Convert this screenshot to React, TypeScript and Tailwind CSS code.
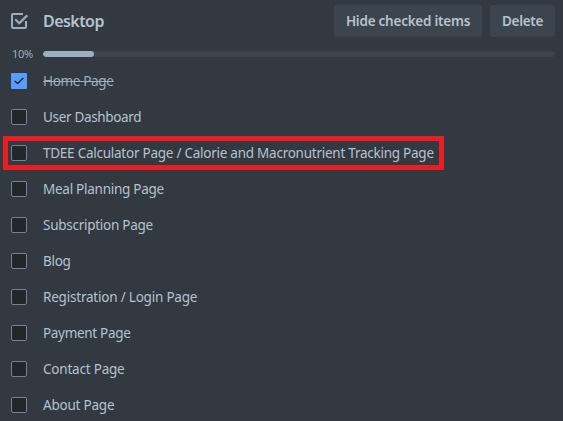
type Item = { label: string; tracking: string; checked?: boolean; highlighted?: boolean };

const items: Item[] = [
  { label: "Home Page", tracking: "tracking-[-0.33px]", checked: true },
  { label: "User Dashboard", tracking: "tracking-[-0.33px]" },
  {
    label: "TDEE Calculator Page / Calorie and Macronutrient Tracking Page",
    tracking: "tracking-[-0.25px]",
    highlighted: true,
  },
  { label: "Meal Planning Page", tracking: "tracking-[-0.26px]" },
  { label: "Subscription Page", tracking: "tracking-[-0.27px]" },
  { label: "Blog", tracking: "tracking-[-0.3px]" },
  { label: "Registration / Login Page", tracking: "tracking-[-0.21px]" },
  { label: "Payment Page", tracking: "tracking-[-0.31px]" },
  { label: "Contact Page", tracking: "tracking-[-0.21px]" },
  { label: "About Page", tracking: "tracking-[-0.22px]" },
];

function ChecklistIcon() {
  return (
    <svg width="18" height="18" viewBox="0 0 18 18" fill="none" stroke="#9fadbc" strokeWidth="2" className="shrink-0">
      <path d="M13 2H3a1 1 0 0 0-1 1v12a1 1 0 0 0 1 1h12a1 1 0 0 0 1-1V9" />
      <path d="M5.2 7.2 9.2 11.2 17.3 3.3" strokeWidth="2.2" />
    </svg>
  );
}

function Checkbox({ checked }: { checked?: boolean }) {
  if (checked) {
    return (
      <span className="flex size-4 shrink-0 items-center justify-center rounded-[1px] bg-[#579dff]">
        <svg width="16" height="16" viewBox="0 0 16 16" fill="none" stroke="#22272b" strokeWidth="1.4" strokeLinecap="round" strokeLinejoin="round">
          <path d="M4 8.2 6.7 10.6 12 5.2" />
        </svg>
      </span>
    );
  }
  return <span className="size-4 shrink-0 rounded-[2px] border border-[#738496] bg-[#22272b]" />;
}

function Row({ item }: { item: Item }) {
  return (
    <li className="relative flex h-9 items-center gap-4 pl-[11px]">
      <Checkbox checked={item.checked} />
      <span
        className={`whitespace-nowrap text-[13.5px] leading-5 ${item.tracking} ${
          item.checked ? "text-[#9fadbc] line-through" : "text-[#b6c2cf]"
        }`}
      >
        {item.label}
      </span>
      {item.highlighted && (
        <span className="absolute top-px left-[3px] h-[34px] w-[441px] border-5 border-[#ed1c24]" />
      )}
    </li>
  );
}

export default function App() {
  return (
    <div className="h-[421px] w-[563px] overflow-hidden bg-[#323940] font-['Noto_Sans',sans-serif] text-[#b6c2cf]">
      <header className="flex h-[42px] items-start pt-[5px] pr-2 pl-[10px]">
        <div className="flex h-8 flex-1 items-center gap-[15px]">
          <ChecklistIcon />
          <h3 className="text-[16px] leading-5 font-semibold tracking-[-0.55px]">Desktop</h3>
        </div>
        <div className="flex gap-2">
          <button className="h-8 w-[148px] rounded-[3px] bg-[#3c444d] text-[13.5px] leading-5 font-semibold tracking-[-0.24px] whitespace-nowrap">
            Hide checked items
          </button>
          <button className="h-8 w-[65px] rounded-[3px] bg-[#3c444d] text-[13.5px] leading-5 font-semibold tracking-[-0.3px]">
            Delete
          </button>
        </div>
      </header>
      <div className="flex h-[21px] items-center pt-[3px] pr-2 pl-3">
        <span className="w-[31px] text-[11px] leading-3 tracking-[-0.3px] text-[#9fadbc]">10%</span>
        <div className="h-[6px] flex-1 overflow-hidden rounded-full bg-[#3c444d]">
          <div className="h-full w-[51px] rounded-full bg-[#9fadbc]" />
        </div>
      </div>
      <ul>
        {items.map((item) => (
          <Row key={item.label} item={item} />
        ))}
      </ul>
    </div>
  );
}
